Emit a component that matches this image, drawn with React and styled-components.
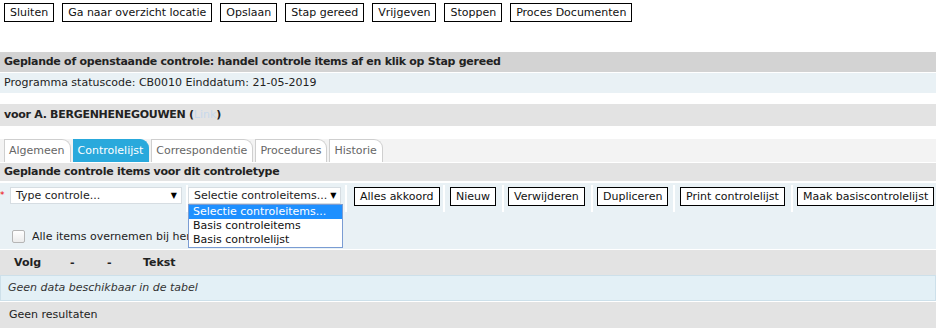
import React from "react";
import styled, { createGlobalStyle } from "styled-components";

const GlobalStyle = createGlobalStyle`
  body {
    margin: 0;
    background: #fff;
    font-family: "DejaVu Sans", Verdana, sans-serif;
    font-size: 11px;
    color: #222;
  }
`;

const Page = styled.div`
  width: 936px;
  height: 328px;
  overflow: hidden;
`;

const TopBar = styled.div`
  display: flex;
  gap: 8px;
  padding: 3px 4px 0;
  height: 52px;
  box-sizing: border-box;
`;

const Button = styled.button`
  font-family: inherit;
  font-size: 11px;
  color: #111;
  background: #fff;
  border: 1px solid #000;
  height: 19px;
  padding: 0 5px;
  line-height: 17px;
  white-space: nowrap;
`;

const Band = styled.div`
  background: ${(p) => p.bg};
  height: ${(p) => p.h}px;
  line-height: ${(p) => p.h}px;
  padding-left: 4px;
  font-weight: ${(p) => (p.bold ? "bold" : "normal")};
  letter-spacing: ${(p) => (p.bold ? "-0.27px" : "normal")};
  margin-top: ${(p) => p.mt || 0}px;
  margin-bottom: ${(p) => p.mb || 0}px;
  white-space: nowrap;
`;

const LinkText = styled.span`
  color: #c7d9ec;
  font-weight: normal;
  letter-spacing: normal;
`;

const TabStrip = styled.div`
  display: flex;
  align-items: flex-end;
  gap: 2px;
  background: #f3f3f3;
  height: 23px;
  padding-left: 4px;
  margin-bottom: 1px;
`;

const Tab = styled.div`
  height: 22px;
  line-height: 22px;
  padding: 0 5px 0 4px;
  border: 1px solid ${(p) => (p.active ? "#29a9dc" : "#cfcfcf")};
  border-bottom: none;
  border-top-right-radius: 9px;
  background: ${(p) => (p.active ? "#29a9dc" : "#fff")};
  color: ${(p) => (p.active ? "#fff" : "#666")};
`;

const ToolArea = styled.div`
  position: relative;
  background: #e9f1f5;
  padding-top: 2px;
  border-top: 2px solid #fff;
`;

const Required = styled.span`
  position: absolute;
  left: 0;
  top: 7px;
  color: #e00;
  font-size: 9px;
`;

const ToolRow = styled.div`
  display: flex;
  gap: 2px;
  background: #fff;
  margin-left: 4px;
  height: 27px;
`;

const Cell = styled.div`
  display: flex;
  align-items: flex-start;
  padding: 2px 0 0 ${(p) => p.pl}px;
  background: #e9f1f5;
  width: ${(p) => (p.w ? `${p.w}px` : "auto")};
  flex: ${(p) => (p.grow ? "1 1 auto" : "none")};
  min-width: 0;
  box-sizing: border-box;
`;

const SelectBox = styled.div`
  position: relative;
  display: flex;
  justify-content: space-between;
  align-items: center;
  width: ${(p) => p.w}px;
  height: 17px;
  padding: 0 4px 0 5px;
  box-sizing: border-box;
  background: #fff;
  border: 1px solid #d6dde2;
  color: #222;
  white-space: nowrap;
`;

const Arrow = styled.span`
  font-size: 8px;
  color: #000;
  margin-left: 3px;
`;

const DropList = styled.ul`
  position: absolute;
  left: -1px;
  top: 16px;
  width: 153px;
  margin: 0;
  padding: 0;
  list-style: none;
  background: #fff;
  border: 1px solid #7a9cd3;
  z-index: 5;
`;

const DropItem = styled.li`
  height: 14px;
  line-height: 14px;
  padding-left: 4px;
  background: ${(p) => (p.selected ? "#1e90ff" : "#fff")};
  color: ${(p) => (p.selected ? "#fff" : "#111")};
  white-space: nowrap;
`;

const CheckRow = styled.label`
  display: flex;
  align-items: center;
  gap: 7px;
  height: 37px;
  padding: 12px 0 0 12px;
  box-sizing: border-box;
  color: #222;
`;

const Check = styled.span`
  flex: none;
  width: 11px;
  height: 11px;
  border: 1px solid #b5b5b5;
  border-radius: 2px;
  background: linear-gradient(#fff, #ececec);
`;

const CheckLabel = styled.span`
  width: 156px;
  overflow: hidden;
  white-space: nowrap;
`;

const TableHead = styled.div`
  display: flex;
  background: #e3e3e3;
  height: 25px;
  align-items: center;
  font-weight: bold;
  padding-left: 14px;
  margin-top: 1px;
`;

const Col = styled.span`
  width: ${(p) => p.w}px;
`;

const EmptyRow = styled.div`
  background: #e3f0f6;
  border: 1px solid #cde0ea;
  height: 24px;
  line-height: 24px;
  padding-left: 7px;
  font-style: italic;
  color: #333;
`;

const Footer = styled.div`
  background: #e3e3e3;
  height: 26px;
  line-height: 26px;
  padding-left: 9px;
  margin-top: 1px;
`;

const topButtons = [
  "Sluiten",
  "Ga naar overzicht locatie",
  "Opslaan",
  "Stap gereed",
  "Vrijgeven",
  "Stoppen",
  "Proces Documenten",
];

const tabs = ["Algemeen", "Controlelijst", "Correspondentie", "Procedures", "Historie"];

const toolButtons = [
  { label: "Alles akkoord", w: 96, pl: 7 },
  { label: "Nieuw", w: 57, pl: 5 },
  { label: "Verwijderen", w: 87, pl: 4 },
  { label: "Dupliceren", w: 80, pl: 4 },
  { label: "Print controlelijst", w: 116, pl: 5 },
];

export default function App() {
  return (
    <Page>
      <GlobalStyle />
      <TopBar>
        {topButtons.map((b) => (
          <Button key={b}>{b}</Button>
        ))}
      </TopBar>

      <Band bg="#d3d3d3" h={20} bold>
        Geplande of openstaande controle: handel controle items af en klik op Stap gereed
      </Band>
      <Band bg="#e9f1f5" h={20} mt={1} mb={11}>
        Programma statuscode: CB0010 Einddatum: 21-05-2019
      </Band>
      <Band bg="#e3e3e3" h={22} bold mb={13}>
        voor A. BERGENHENEGOUWEN (<LinkText>Link</LinkText>)
      </Band>

      <TabStrip>
        {tabs.map((t) => (
          <Tab key={t} active={t === "Controlelijst"}>
            {t}
          </Tab>
        ))}
      </TabStrip>

      <Band bg="#e3e3e3" h={18} bold>
        Geplande controle items voor dit controletype
      </Band>

      <ToolArea>
        <Required>*</Required>
        <ToolRow>
          <Cell w={182} pl={6}>
            <SelectBox w={172}>
              Type controle...
              <Arrow>▼</Arrow>
            </SelectBox>
          </Cell>
          <Cell w={157} pl={0}>
            <SelectBox w={153}>
              Selectie controleitems...
              <Arrow>▼</Arrow>
              <DropList>
                <DropItem selected>Selectie controleitems...</DropItem>
                <DropItem>Basis controleitems</DropItem>
                <DropItem>Basis controlelijst</DropItem>
              </DropList>
            </SelectBox>
          </Cell>
          {toolButtons.map((b) => (
            <Cell key={b.label} w={b.w} pl={b.pl}>
              <Button>{b.label}</Button>
            </Cell>
          ))}
          <Cell grow pl={4}>
            <Button>Maak basiscontrolelijst</Button>
          </Cell>
        </ToolRow>
        <CheckRow>
          <Check />
          <CheckLabel>Alle items overnemen bij herctrl</CheckLabel>
        </CheckRow>
      </ToolArea>

      <TableHead>
        <Col w={56}>Volg</Col>
        <Col w={37}>-</Col>
        <Col w={36}>-</Col>
        <Col w={60}>Tekst</Col>
      </TableHead>
      <EmptyRow>Geen data beschikbaar in de tabel</EmptyRow>
      <Footer>Geen resultaten</Footer>
    </Page>
  );
}
